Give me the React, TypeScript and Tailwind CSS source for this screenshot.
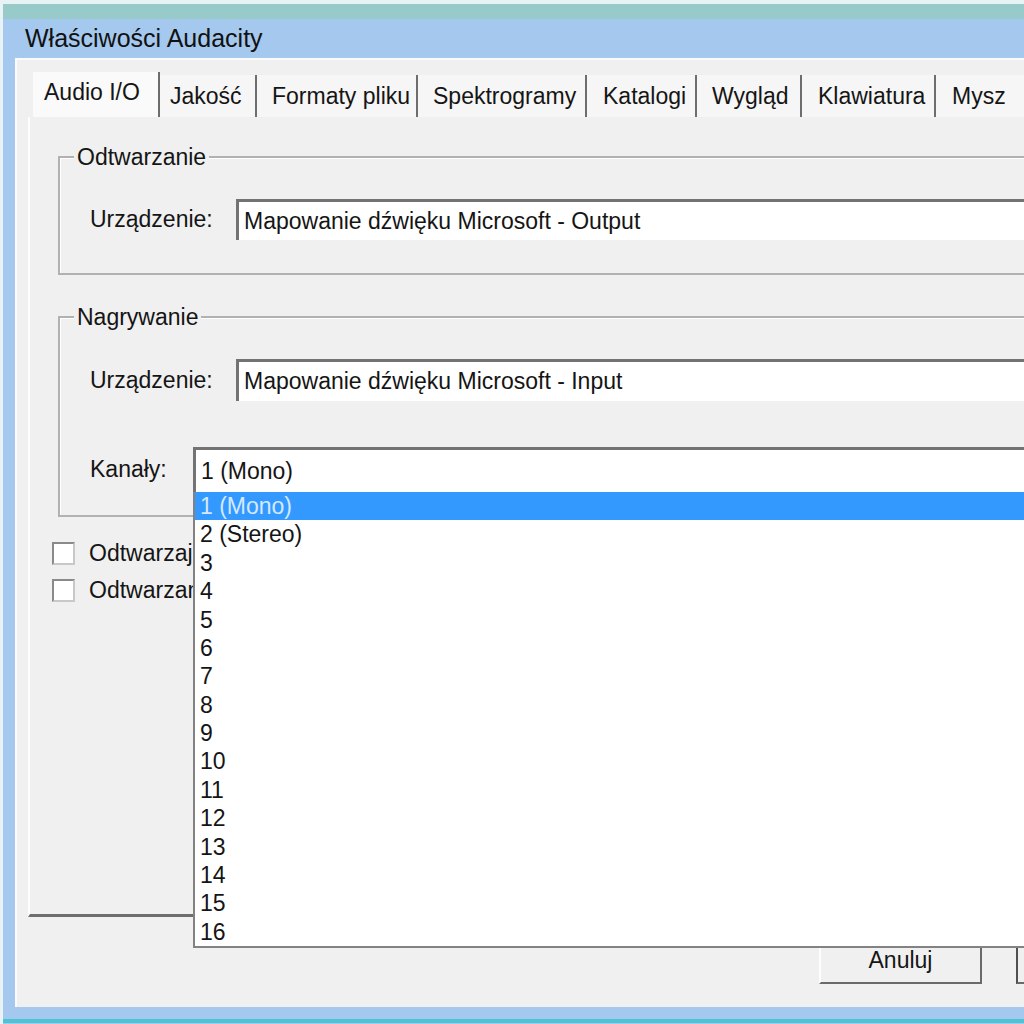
import React from "react";

const tabs = [
  { label: "Audio I/O", cls: "w-[127px] pl-[11px] pb-[5px] h-[45px] bg-[#fafafa]" },
  { label: "Jakość", cls: "w-[97px] pl-[10px] h-[42px] bg-[#f6f6f6]" },
  { label: "Formaty pliku", cls: "w-[161px] pl-[15px] h-[42px] bg-[#f6f6f6]" },
  { label: "Spektrogramy", cls: "w-[169px] pl-[15px] h-[42px] bg-[#f6f6f6]" },
  { label: "Katalogi", cls: "w-[110px] pl-[16px] h-[42px] bg-[#f6f6f6]" },
  { label: "Wygląd", cls: "w-[105px] pl-[15px] h-[42px] bg-[#f6f6f6]" },
  { label: "Klawiatura", cls: "w-[134px] pl-[16px] h-[42px] bg-[#f6f6f6]" },
  { label: "Mysz", cls: "w-[110px] pl-[16px] h-[42px] bg-[#f6f6f6]" },
];

const channels = [
  "1 (Mono)",
  "2 (Stereo)",
  "3",
  "4",
  "5",
  "6",
  "7",
  "8",
  "9",
  "10",
  "11",
  "12",
  "13",
  "14",
  "15",
  "16",
];

function GroupLabel({ children }: { children: React.ReactNode }) {
  return (
    <div className="-mt-[13px] ml-[14px] w-fit bg-[#f0f0f0] px-[3px] leading-[24px]">
      {children}
    </div>
  );
}

function Field({ label, labelCls, value, h }: { label: string; labelCls: string; value: string; h: string }) {
  return (
    <div className="flex items-center">
      <div className={labelCls}>{label}</div>
      <div className={`flex flex-1 items-center border-l-[3px] border-t-[3px] border-[#737373] bg-white pl-[5px] ${h}`}>
        {value}
      </div>
    </div>
  );
}

// label is clipped where the open list covers it
function Checkbox({ label }: { label: string }) {
  return (
    <div className="flex h-[24px] items-center">
      <div className="h-[23px] w-[23px] shrink-0 border-2 border-[#8a8a8a] border-b-[#c8c8c8] border-r-[#c8c8c8] bg-white" />
      <span className="ml-[14px] w-[104px] overflow-hidden whitespace-nowrap">{label}</span>
    </div>
  );
}

export default function App() {
  return (
    <div className="relative h-[1024px] w-[1024px] overflow-hidden bg-[#e9f3f6] font-['Liberation_Sans',Arial,sans-serif] text-[23px] text-[#151515]">
      <div className="h-[4px] bg-[#e6f2f3]" />
      <div className="flex h-[1020px] pl-[3px]">
        <div className="flex w-[1240px] shrink-0 flex-col bg-[#a4c8ee]">
          <div className="h-[15px] bg-[#97cac8]" />
          {/* title bar */}
          <div className="flex h-[39px] items-center pl-[22px] text-[25px] text-[#111]">Właściwości Audacity</div>

          {/* dialog body */}
          <div className="ml-[12px] flex h-[949px] flex-col border-l-2 border-t-2 border-[#fbfbfb] bg-[#f0f0f0] pl-[11px] pt-[10px]">
            {/* tab strip */}
            <div className="flex h-[47px] items-end pl-[5px]">
              {tabs.map((t) => (
                <div
                  key={t.label}
                  className={`flex shrink-0 items-center whitespace-nowrap border-r-2 border-[#6d6d6d] ${t.cls}`}
                >
                  {t.label}
                </div>
              ))}
            </div>

            {/* tab panel */}
            <div className="flex h-[800px] flex-col border-b-[3px] border-l-2 border-[#6e6e6e] border-l-[#fdfdfd] pl-[28px] pt-[39px]">
              <div className="border-2 border-[#b1b1b1] pb-[33px] shadow-[inset_1px_1px_0_#ffffff]">
                <GroupLabel>Odtwarzanie</GroupLabel>
                <div className="mt-[30px] pl-[30px]">
                  <Field label="Urządzenie:" labelCls="w-[146px]" value="Mapowanie dźwięku Microsoft - Output" h="h-[41px]" />
                </div>
              </div>

              <div className="mt-[41px] border-2 border-[#b1b1b1] pb-[23px] shadow-[inset_1px_1px_0_#ffffff]">
                <GroupLabel>Nagrywanie</GroupLabel>
                <div className="mt-[30px] pl-[30px]">
                  <Field label="Urządzenie:" labelCls="w-[146px]" value="Mapowanie dźwięku Microsoft - Input" h="h-[42px]" />
                </div>
                <div className="mt-[46px] pl-[30px]">
                  <Field label="Kanały:" labelCls="w-[103px]" value="1 (Mono)" h="h-[45px] border-l-2 border-t-2" />
                </div>
              </div>

              <div className="-ml-[6px] mt-[24px] flex flex-col gap-[13px]">
                <Checkbox label="Odtwarzaj inne ścieżki podczas nagrywania" />
                <Checkbox label="Odtwarzanie programowe" />
              </div>
            </div>

            {/* buttons */}
            <div className="mt-[13px] flex gap-[34px] pl-[791px]">
              <div className="flex h-[54px] w-[163px] shrink-0 items-center justify-center border-2 border-[#fdfdfd] border-b-[#6a6a6a] border-r-[#6a6a6a] bg-[#f0f0f0] pt-[6px]">
                Anuluj
              </div>
              <div className="flex h-[54px] w-[163px] shrink-0 items-center justify-center border-2 border-[#505050] border-b-[#6a6a6a] border-r-[#6a6a6a] bg-[#f0f0f0]">
                OK
              </div>
            </div>
          </div>

          <div className="h-[12px]" />
          <div className="h-[4px] bg-[#4cc4d4]" />
        </div>
      </div>

      {/* open combo dropdown */}
      <div className="absolute left-[193px] top-[492px] flex h-[456px] w-[860px] flex-col border-b-2 border-l-2 border-[#828282] bg-white">
        {channels.map((c, i) => (
          <div
            key={c}
            className={
              i === 0
                ? "h-[28.4px] bg-[#3399ff] pl-[5px] leading-[28px] text-[#d4e9ff]"
                : "h-[28.4px] pl-[5px] leading-[28px]"
            }
          >
            {c}
          </div>
        ))}
      </div>
    </div>
  );
}
